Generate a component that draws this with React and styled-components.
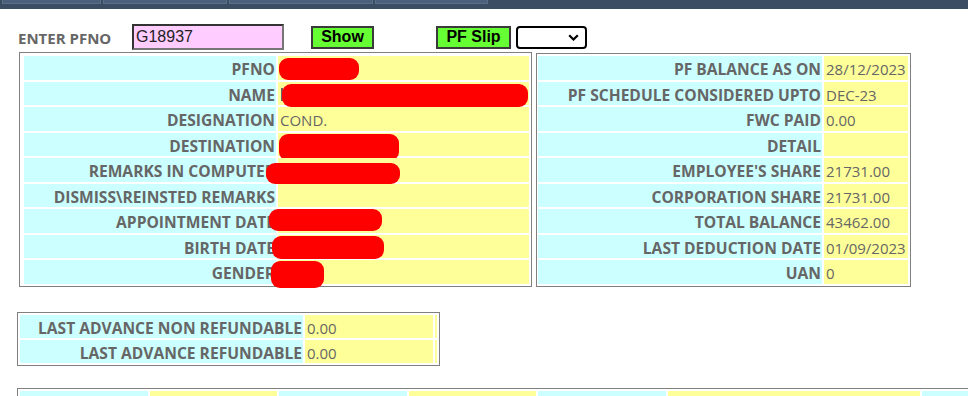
import React from 'react';
import styled, { createGlobalStyle } from 'styled-components';

const GlobalStyle = createGlobalStyle`
html, body {
margin: 0;
padding: 0;
overflow: hidden;
background: #fff;
font-family: 'Open Sans', 'Noto Sans', sans-serif;
}
`;

const TopBar = styled.div`
height: 9px;
background: #3a4d63;
display: flex;
align-items: flex-start;
gap: 2px;
padding-left: 2px;
`;

const MenuTab = styled.div`
width: ${(p) => p.$w}px;
height: 4px;
box-sizing: border-box;
background: #4b607a;
border: 1px solid #5a6f89;
border-top: none;
`;

const SearchRow = styled.div`
display: flex;
align-items: center;
height: 26px;
margin-top: 15px;
padding-left: 18px;
`;

const FieldLabel = styled.span`
width: 114px;
font-size: 15px;
font-weight: 700;
color: #666;
padding-top: 1px;
`;

const PfInput = styled.input`
box-sizing: border-box;
width: 152px;
height: 26px;
padding: 0 2px;
background: #ffccff;
border: 2px solid;
border-color: #333 #767676 #767676 #333;
font-family: 'Liberation Sans', Arial, sans-serif;
font-size: 16px;
color: #222;
outline: none;
`;

const ActionButton = styled.button`
box-sizing: border-box;
width: ${(p) => p.$w}px;
height: 23px;
margin-left: ${(p) => p.$gap}px;
padding: 0;
background: #66ff33;
border: 2px solid #3a3a3a;
font-family: 'Liberation Sans', Arial, sans-serif;
font-size: 16px;
font-weight: 700;
color: #000;
`;

const SlipPicker = styled.div`
display: grid;
align-items: center;
width: 71px;
height: 23px;
margin-left: 5px;
box-sizing: border-box;
border: 2px solid #000;
border-radius: 4px;
background: #fff;
`;

const PickerSelect = styled.select`
grid-area: 1 / 1;
appearance: none;
border: none;
background: transparent;
height: 100%;
outline: none;
`;

const Chevron = styled.svg`
grid-area: 1 / 1;
justify-self: end;
margin-right: 6px;
pointer-events: none;
`;

const DataRow = styled.div`
display: flex;
align-items: flex-start;
gap: 4px;
margin-top: 2px;
margin-left: 19px;
`;

const DataTable = styled.div`
display: grid;
grid-template-columns: ${(p) => p.$cols};
grid-auto-rows: ${(p) => p.$row || 23.5}px;
gap: 2px;
padding: ${(p) => p.$pad || '2px'};
margin-top: ${(p) => p.$top || 0}px;
margin-left: ${(p) => p.$left || 0}px;
border: 1px solid #808080;
width: max-content;
`;

const LabelCell = styled.div`
display: flex;
align-items: center;
justify-content: flex-end;
padding: 3px 1px 0 0;
background: #ccffff;
color: #666;
font-size: 15.6px;
font-weight: 700;
white-space: nowrap;
`;

const ValueCell = styled.div`
position: relative;
display: flex;
align-items: center;
padding: 3px 0 0 2px;
background: #ffff99;
color: #666;
font-size: 15px;
white-space: nowrap;
`;

const Redact = styled.span`
position: absolute;
left: ${(p) => p.$x}px;
top: ${(p) => p.$y}px;
width: ${(p) => p.$w}px;
height: ${(p) => p.$h}px;
border-radius: 9px;
background: #ff0000;
`;

const NameStub = styled.span`
position: absolute;
left: 3px;
top: 6px;
width: 2px;
height: 13px;
background: #666;
`;

const Spacer = styled.div`
background: ${(p) => (p.$tone === 'y' ? '#ffff99' : '#ccffff')};
`;

const personal = [
	['PFNO', '', { $x: 1, $y: 2, $w: 80, $h: 22 }],
	['NAME', '', { $x: 4, $y: 2, $w: 246, $h: 23.5 }],
	['DESIGNATION', 'COND.'],
	['DESTINATION', '', { $x: 1, $y: 1, $w: 120, $h: 27 }],
	['REMARKS IN COMPUTER', '', { $x: -12, $y: 5, $w: 134, $h: 20.5 }],
	['DISMISS\\REINSTED REMARKS', ''],
	['APPOINTMENT DATE', '', { $x: -9, $y: 0, $w: 113, $h: 22 }],
	['BIRTH DATE', '', { $x: -6, $y: 1, $w: 112, $h: 23 }],
	['GENDER', '', { $x: -7, $y: 1, $w: 53, $h: 26.5 }],
];

const balance = [
	['PF BALANCE AS ON', '28/12/2023'],
	['PF SCHEDULE CONSIDERED UPTO', 'DEC-23'],
	['FWC PAID', '0.00'],
	['DETAIL', ''],
	["EMPLOYEE'S SHARE", '21731.00'],
	['CORPORATION SHARE', '21731.00'],
	['TOTAL BALANCE', '43462.00'],
	['LAST DEDUCTION DATE', '01/09/2023'],
	['UAN', '0'],
];

const tabs = [99, 124, 144, 113];
const bottomCols = ['c', 'y', 'c', 'y', 'c', 'y', 'c'];

const App = () => (
	<>
		<GlobalStyle />
		<TopBar>
			{tabs.map((w, i) => <MenuTab key={i} $w={w} />)}
		</TopBar>
		<SearchRow>
			<FieldLabel>ENTER PFNO</FieldLabel>
			<PfInput readOnly value="G18937" />
			<ActionButton $w={63} $gap={27}>Show</ActionButton>
			<ActionButton $w={75} $gap={62}>PF Slip</ActionButton>
			<SlipPicker>
				<PickerSelect />
				<Chevron width="11" height="7" viewBox="0 0 11 7">
					<polyline points="1.2,1.2 5.5,5.5 9.8,1.2" fill="none" stroke="#000" strokeWidth="2.2" />
				</Chevron>
			</SlipPicker>
		</SearchRow>
		<DataRow>
			<DataTable $cols="252px 251px" $pad="3px 2px 2px 4px">
				{personal.map(([label, value, box]) => (
					<React.Fragment key={label}>
						<LabelCell>{label}</LabelCell>
						<ValueCell>
							{value}
							{label === 'NAME' && <NameStub />}
							{box && <Redact {...box} />}
						</ValueCell>
					</React.Fragment>
				))}
			</DataTable>
			<DataTable $cols="284px 84px" $pad="2px 2px 2px 1px" $top={1}>
				{balance.map(([label, value]) => (
					<React.Fragment key={label}>
						<LabelCell>{label}</LabelCell>
						<ValueCell>{value}</ValueCell>
					</React.Fragment>
				))}
			</DataTable>
		</DataRow>
		<DataTable $cols="283px 128px 2px" $row={23} $top={25} $left={17}>
			<LabelCell>LAST ADVANCE NON REFUNDABLE</LabelCell>
			<ValueCell>0.00</ValueCell>
			<Spacer $tone="y" />
			<LabelCell>LAST ADVANCE REFUNDABLE</LabelCell>
			<ValueCell>0.00</ValueCell>
			<Spacer $tone="y" />
		</DataTable>
		<DataTable $cols="128px 127px 128px 127px 128px 252px 128px" $top={22} $left={17}>
			{bottomCols.map((tone, i) => <Spacer key={i} $tone={tone} />)}
		</DataTable>
	</>
);

export default App;
